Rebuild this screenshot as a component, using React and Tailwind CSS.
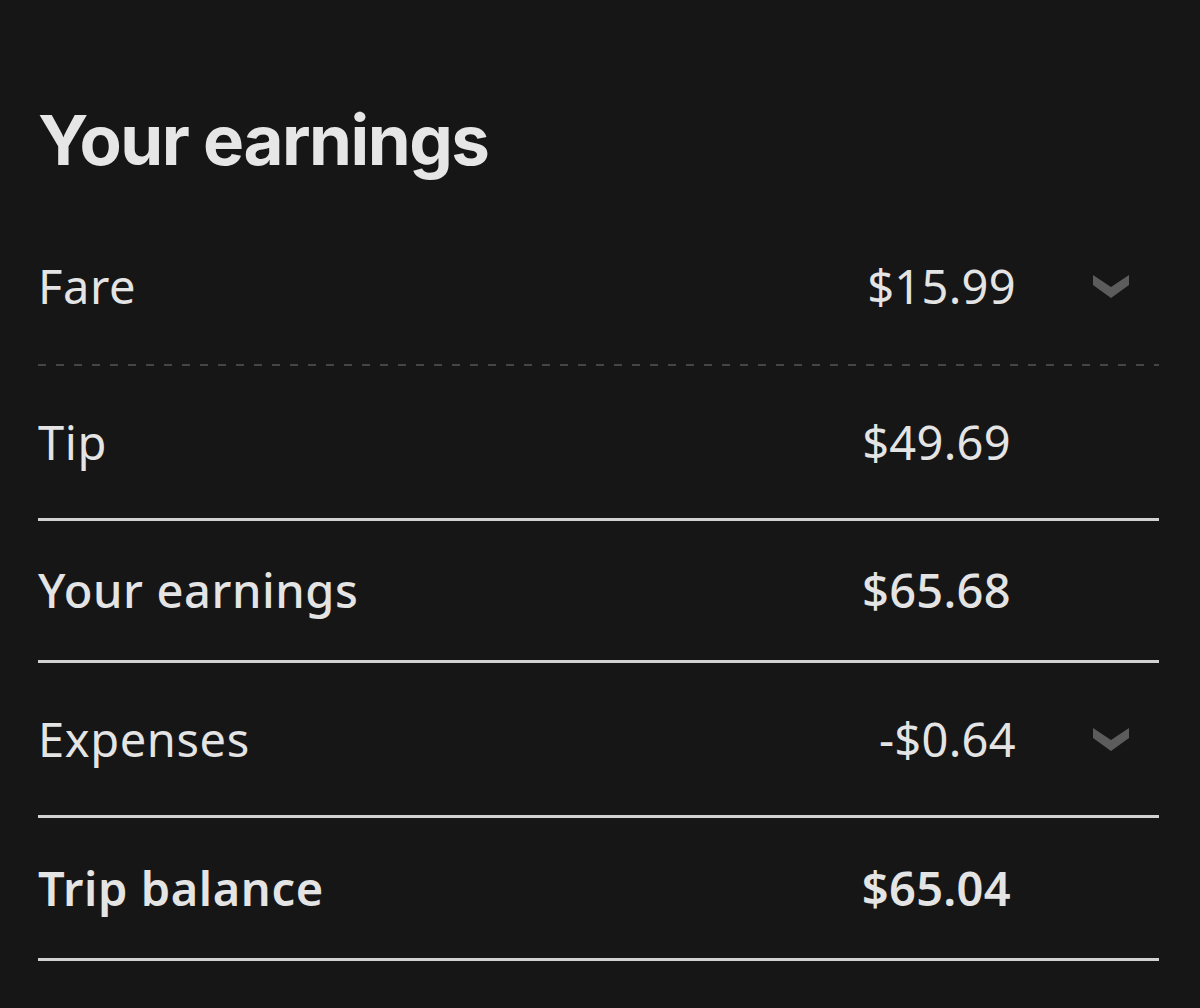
import React from "react";

function Chevron() {
  return (
    <svg width="36" height="23" viewBox="0 0 36 23" className="shrink-0">
      <polygon points="0,0 18,12 36,0 36,10 18,23 0,10" fill="#5c5c5c" />
    </svg>
  );
}

function Row({ label, value, chevron, bold, semibold, h }) {
  const weight = semibold ? "font-semibold" : bold ? "font-medium" : "font-normal";
  return (
    <div className={`flex items-center ${h}`}>
      <div className={`flex-1 text-[47px] tracking-[0.6px] text-[#e4e4e4] ${weight}`}>
        {label}
      </div>
      <div
        className={`text-[47px] tracking-[0.3px] text-[#e4e4e4] text-right ${weight} ${
          chevron ? "mr-[77px]" : "mr-[148px]"
        }`}
      >
        {value}
      </div>
      {chevron && (
        <div className="mr-[30px]">
          <Chevron />
        </div>
      )}
    </div>
  );
}

function Solid() {
  return <div className="h-[3px] bg-[#d2d2d2]" />;
}

export default function App() {
  return (
    <div
      className="w-[1200px] h-[1008px] bg-[#161616] overflow-hidden pl-[38px] pr-[41px]"
      style={{ fontFamily: '"Noto Sans", Roboto, sans-serif' }}
    >
      <div className="h-[209px] flex items-start pt-[106px]">
        <h1
          className="text-[69px] leading-none font-bold tracking-[-1.5px] text-[#e6e6e6]"
          style={{ fontFamily: 'Inter, "Noto Sans", sans-serif' }}
        >
          Your earnings
        </h1>
      </div>
      <Row label="Fare" value="$15.99" chevron h="h-[155px]" />
      <div className="h-[2px] bg-[repeating-linear-gradient(90deg,#454545_0_8px,transparent_8px_18px)]" />
      <Row label="Tip" value="$49.69" h="h-[152px]" />
      <Solid />
      <Row label="Your earnings" value="$65.68" bold h="h-[139px]" />
      <Solid />
      <Row label="Expenses" value="-$0.64" chevron h="h-[152px]" />
      <Solid />
      <Row label="Trip balance" value="$65.04" semibold h="h-[140px]" />
      <Solid />
    </div>
  );
}
